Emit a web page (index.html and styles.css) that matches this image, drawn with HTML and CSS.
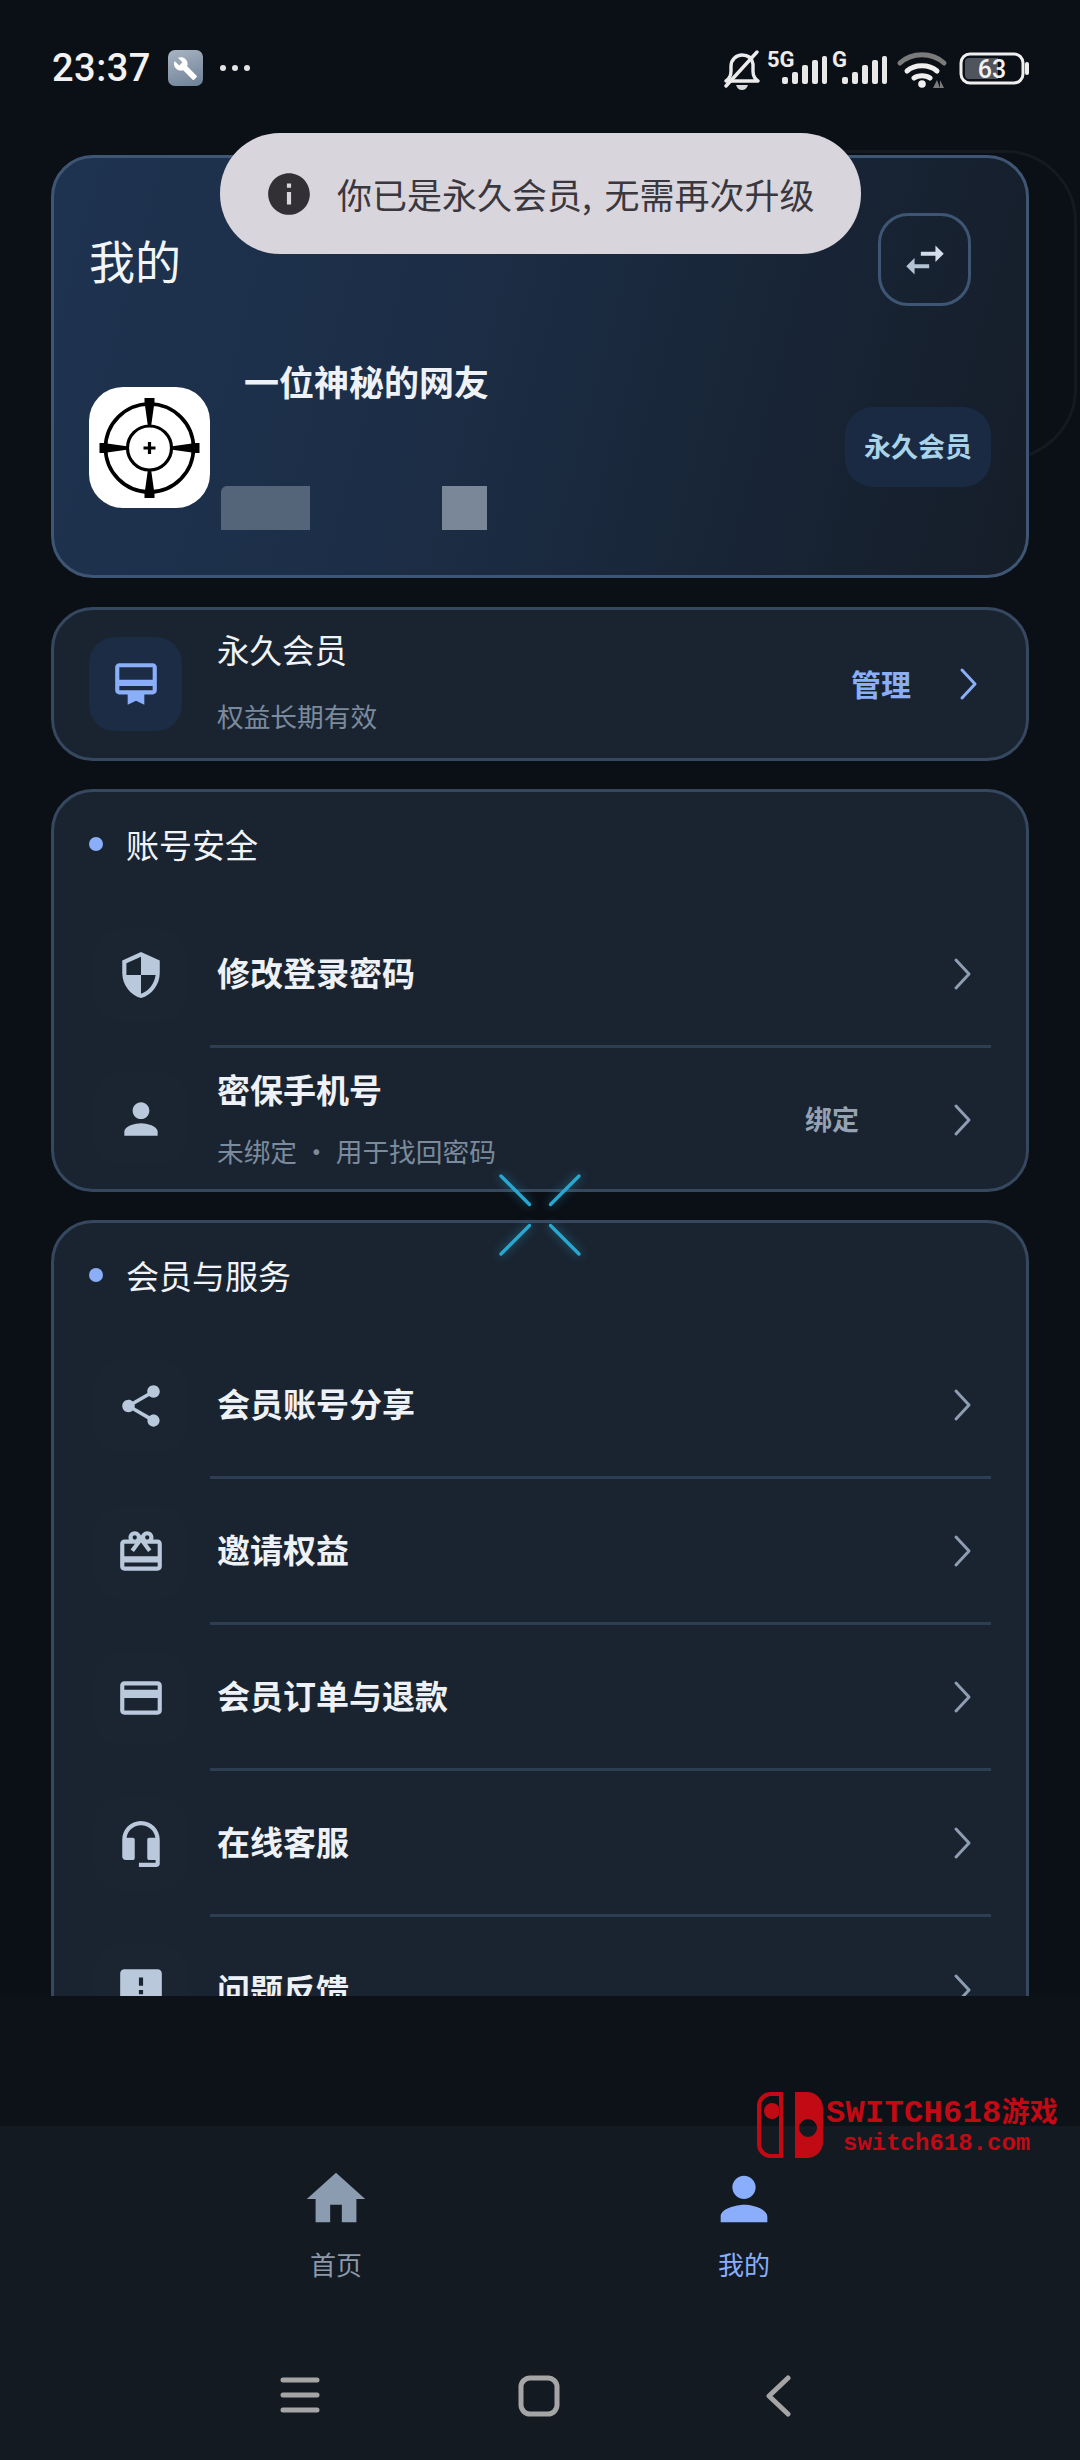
FILE: index.html
```html
<!DOCTYPE html>
<html lang="zh-CN">
<head>
<meta charset="utf-8">
<title>我的</title>
<link rel="stylesheet" href="styles.css">
</head>
<body>
<div class="screen">
  <header class="status">
    <div class="status-left">
      <span class="time">23:37</span>
      <span class="tool-badge"><svg viewBox="0 0 24 24" class="tool-icon"><path d="M22.7 19l-9.1-9.1c.9-2.3.4-5-1.5-6.9-2-2-5-2.4-7.4-1.3L9 6 6 9 1.6 4.7C.4 7.1.9 10.1 2.9 12.1c1.9 1.9 4.6 2.4 6.9 1.5l9.1 9.1c.4.4 1 .4 1.4 0l2.3-2.3c.5-.4.5-1.1.1-1.4z"/></svg></span>
      <span class="more"><i></i><i></i><i></i></span>
    </div>
    <svg class="status-right" viewBox="0 -10 310 54" width="310" height="54">
      <g fill="none" stroke="#ececec" stroke-width="3.4" stroke-linecap="round" stroke-linejoin="round">
        <path d="M2 31c3-2 5-5 5-10v-5c0-6 5-11 11-11s10 3 11 9v7c0 5 2 8 5 10z"/>
        <path d="M2 36L33 2"/>
      </g>
      <path d="M12 35h12c-1 3-3 5-6 5s-5-2-6-5z" fill="#d8d8d8"/>
      <text x="43" y="17" class="net">5G</text>
      <g fill="#e8e8e8">
        <rect x="58" y="27" width="6" height="7" rx="2"/><rect x="68" y="22" width="6" height="12" rx="2"/><rect x="78" y="15" width="6" height="19" rx="2"/><rect x="88" y="10" width="6" height="24" rx="2"/><rect x="98" y="6" width="5" height="28" rx="2"/>
      </g>
      <text x="108" y="17" class="net">G</text>
      <g fill="#e8e8e8">
        <rect x="118" y="27" width="6" height="7" rx="2"/><rect x="128" y="22" width="6" height="12" rx="2"/><rect x="138" y="15" width="6" height="19" rx="2"/><rect x="148" y="10" width="6" height="24" rx="2"/><rect x="158" y="6" width="5" height="28" rx="2"/>
      </g>
      <g fill="none" stroke-width="5" stroke-linecap="round">
        <path d="M176 13c12-11 32-11 44 0" stroke="#7b7b7b"/>
        <path d="M183 21c8-7 22-7 30 0" stroke="#efefef"/>
        <path d="M190 28c4-3 12-3 16 0" stroke="#efefef"/>
      </g>
      <circle cx="198" cy="34" r="3.8" fill="#efefef"/>
      <path d="M209 38l4-8 3 8z M216 38v-8l4 8z" fill="#7b7b7b"/>
      <rect x="237" y="4" width="62" height="29" rx="9" fill="none" stroke="#efefef" stroke-width="3"/>
      <path d="M245 8h29v21h-29a4 4 0 0 1-4-4V12a4 4 0 0 1 4-4z" fill="#50545d"/>
      <text x="268" y="28" class="batt">63</text>
      <rect x="301" y="12" width="4" height="13" rx="2" fill="#efefef"/>
    </svg>
  </header>

  <div class="halo"></div>

  <main class="content">
    <section class="card hero">
      <div class="hero-head">
        <h1 class="hero-title">我的</h1>
        <button class="swap"><svg viewBox="0 0 24 24" class="swap-icon"><path class="swap-a" d="M6.99 11L3 15l3.99 4v-3H14v-2H6.99v-3z"/><path class="swap-b" d="M21 9l-3.99-4v3H10v2h7.01v3L21 9z"/></svg></button>
      </div>
      <div class="profile">
        <div class="avatar">
          <svg viewBox="0 0 121 121" width="121" height="121">
            <g fill="none" stroke="#000">
              <circle cx="60.5" cy="61" r="44" stroke-width="3.6"/>
              <circle cx="60.5" cy="61" r="22" stroke-width="3.2"/>
            </g>
            <path d="M55.5 11h10v4l-3.5 25h-3l-3.500-25z M55.500 111h10v-4l-3.500-25h-3l-3.500 25z M10.500 56v10h4l25-3.500v-3l-25-3.500z M110.500 56v10h-4l-25-3.500v-3l25-3.500z"/>
            <path d="M58.900 55h3.200v4.400h4.400v3.200h-4.400V67h-3.200v-4.400h-4.400v-3.200h4.400z"/>
          </svg>
        </div>
        <div class="identity">
          <div class="name">一位神秘的网友</div>
          <div class="redacted"><span class="blur-a"></span><span class="blur-b"></span></div>
        </div>
        <span class="badge">永久会员</span>
      </div>
    </section>

    <section class="card plan">
      <span class="plan-icon"><svg viewBox="0 0 24 24" class="icon icon-blue"><path d="M20 2H4c-1.110 0-2 .89-2 2v11c0 1.110.89 2 2 2h4v5l4-2 4 2v-5h4c1.110 0 2-.89 2-2V4c0-1.110-.89-2-2-2zm0 13H4v-2h16v2zm0-5H4V4h16v6z"/></svg></span>
      <div class="plan-text">
        <div class="plan-title">永久会员</div>
        <div class="sub">权益长期有效</div>
      </div>
      <span class="manage">管理</span>
      <svg viewBox="0 0 50 50" class="chevron chevron-blue"><path d="M18 11l13 14-13 14"/></svg>
    </section>

    <section class="card list">
      <h2 class="section"><i class="dot"></i>账号安全</h2>
      <div class="row">
        <span class="row-icon"><svg viewBox="0 0 24 24" class="icon"><path d="M12 1L3 5v6c0 5.550 3.840 10.740 9 12 5.160-1.260 9-6.450 9-12V5l-9-4zm0 10.990h7c-.53 4.120-3.280 7.790-7 9.010V12H5V6.300l7-3.110v8.800z"/></svg></span>
        <div class="row-body"><span class="row-title">修改登录密码</span><svg viewBox="0 0 50 50" class="chevron"><path d="M18 11l13 14-13 14"/></svg></div>
      </div>
      <div class="row row-tall">
        <span class="row-icon"><svg viewBox="0 0 24 24" class="icon"><path d="M12 12c2.210 0 4-1.790 4-4s-1.790-4-4-4-4 1.790-4 4 1.790 4 4 4zm0 2c-2.670 0-8 1.340-8 4v2h16v-2c0-2.660-5.330-4-8-4z"/></svg></span>
        <div class="row-body">
          <div class="row-stack"><span class="row-title">密保手机号</span><span class="sub">未绑定 · 用于找回密码</span></div>
          <span class="row-action">绑定</span>
          <svg viewBox="0 0 50 50" class="chevron"><path d="M18 11l13 14-13 14"/></svg>
        </div>
      </div>
    </section>

    <section class="card list">
      <h2 class="section"><i class="dot"></i>会员与服务</h2>
      <div class="row">
        <span class="row-icon"><svg viewBox="0 0 24 24" class="icon"><path d="M18 16.080c-.76 0-1.440.3-1.960.77L8.910 12.700c.05-.23.09-.46.09-.7s-.04-.47-.09-.7l7.050-4.110c.54.5 1.250.81 2.040.81 1.660 0 3-1.340 3-3s-1.340-3-3-3-3 1.340-3 3c0 .24.04.47.09.7L8.040 9.810C7.500 9.310 6.790 9 6 9c-1.660 0-3 1.340-3 3s1.340 3 3 3c.79 0 1.500-.31 2.040-.81l7.120 4.160c-.05.21-.08.43-.08.65 0 1.610 1.310 2.920 2.920 2.920 1.610 0 2.920-1.310 2.920-2.920s-1.310-2.920-2.920-2.920z"/></svg></span>
        <div class="row-body"><span class="row-title">会员账号分享</span><svg viewBox="0 0 50 50" class="chevron"><path d="M18 11l13 14-13 14"/></svg></div>
      </div>
      <div class="row">
        <span class="row-icon"><svg viewBox="0 0 24 24" class="icon"><path d="M20 6h-2.180c.11-.31.18-.65.18-1 0-1.660-1.340-3-3-3-1.050 0-1.960.54-2.500 1.350l-.5.67-.5-.68C10.960 2.540 10.050 2 9 2 7.340 2 6 3.340 6 5c0 .35.07.69.18 1H4c-1.110 0-1.990.89-1.990 2L2 19c0 1.110.89 2 2 2h16c1.110 0 2-.89 2-2V8c0-1.110-.89-2-2-2zm-5-2c.55 0 1 .45 1 1s-.45 1-1 1-1-.45-1-1 .45-1 1-1zM9 4c.55 0 1 .45 1 1s-.45 1-1 1-1-.45-1-1 .45-1 1-1zm11 15H4v-2h16v2zm0-5H4V8h5.080L7 10.830 8.620 12 11 8.760l1-1.360 1 1.360L15.380 12 17 10.830 14.920 8H20v6z"/></svg></span>
        <div class="row-body"><span class="row-title">邀请权益</span><svg viewBox="0 0 50 50" class="chevron"><path d="M18 11l13 14-13 14"/></svg></div>
      </div>
      <div class="row">
        <span class="row-icon"><svg viewBox="0 0 24 24" class="icon"><path d="M20 4H4c-1.110 0-1.990.89-1.990 2L2 18c0 1.110.89 2 2 2h16c1.110 0 2-.89 2-2V6c0-1.110-.89-2-2-2zm0 14H4v-6h16v6zm0-10H4V6h16v2z"/></svg></span>
        <div class="row-body"><span class="row-title">会员订单与退款</span><svg viewBox="0 0 50 50" class="chevron"><path d="M18 11l13 14-13 14"/></svg></div>
      </div>
      <div class="row">
        <span class="row-icon"><svg viewBox="0 0 24 24" class="icon"><path d="M12 1C6.900 1 3 5 3 10v8c0 1 .7 1.700 1.700 1.700H8c.6 0 1-.4 1-1v-8.700c0-.6-.4-1-1-1H5.100C5.500 5.700 8.300 3 12 3s6.500 2.700 6.900 6H16c-.6 0-1 .4-1 1v8.700c0 .6.4 1 1 1h3v1.300h-8V23h8.500c.9 0 1.500-.7 1.500-1.500V10c0-5-3.900-9-9-9z"/></svg></span>
        <div class="row-body"><span class="row-title">在线客服</span><svg viewBox="0 0 50 50" class="chevron"><path d="M18 11l13 14-13 14"/></svg></div>
      </div>
      <div class="row">
        <span class="row-icon"><svg viewBox="0 0 24 24" class="icon"><path d="M20 2H4c-1.100 0-1.990.9-1.990 2L2 22l4-4h14c1.100 0 2-.9 2-2V4c0-1.100-.9-2-2-2zm-7 12h-2v-2h2v2zm0-4h-2V6h2v4z"/></svg></span>
        <div class="row-body"><span class="row-title">问题反馈</span><svg viewBox="0 0 50 50" class="chevron"><path d="M18 11l13 14-13 14"/></svg></div>
      </div>
    </section>
  </main>

  <div class="gap-band"></div>

  <footer class="footer">
    <nav class="tabs">
      <div class="tab">
        <svg viewBox="0 0 24 24" class="tab-icon"><path d="M10 20v-6h4v6h5v-8h3L12 3 2 12h3v8z"/></svg>
        <span>首页</span>
      </div>
      <div class="tab tab-active">
        <svg viewBox="0 0 24 24" class="tab-icon"><path d="M12 12c2.210 0 4-1.790 4-4s-1.790-4-4-4-4 1.790-4 4 1.790 4 4 4zm0 2c-2.670 0-8 1.340-8 4v2h16v-2c0-2.660-5.330-4-8-4z"/></svg>
        <span>我的</span>
      </div>
    </nav>
    <div class="sysnav">
      <svg viewBox="0 0 40 42" class="sys-icon"><path d="M3 5h34M3 20h34M3 35h34"/></svg>
      <svg viewBox="0 0 42 42" class="sys-icon"><rect x="3" y="3" width="36" height="36" rx="9"/></svg>
      <svg viewBox="0 0 30 42" class="sys-icon"><path d="M25 3L6 21l19 18"/></svg>
    </div>
  </footer>

  <div class="toast">
    <svg viewBox="0 0 24 24" class="toast-icon"><path d="M12 2C6.480 2 2 6.480 2 12s4.480 10 10 10 10-4.480 10-10S17.520 2 12 2zm1 15h-2v-6h2v6zm0-8h-2V7h2v2z"/></svg>
    <span>你已是永久会员, 无需再次升级</span>
  </div>

  <svg class="spinner" viewBox="0 0 90 90" width="90" height="90">
    <path d="M6 6l28.500 28.500M84 6L55.500 34.500M6 84l28.500-28.500M84 84L55.500 55.500"/>
  </svg>

  <div class="watermark">
    <svg viewBox="0 0 66 66" width="66" height="66" class="wm-logo">
      <path fill-rule="evenodd" d="M14 0h12v66H14C6 66 0 60 0 52V14C0 6 6 0 14 0zM22 4h-8C9 4 4 9 4 14v38c0 5 5 10 10 10h8zM15 11a8 8 0 1 0 .01 16A8 8 0 0 0 15 11z"/>
      <path fill-rule="evenodd" d="M38 0h12c9 0 16 7 16 16v34c0 9-7 16-16 16H38zM51 27a9 9 0 1 0 .01 18A9 9 0 0 0 51 27z"/>
    </svg>
    <div class="wm-text">
      <div class="wm-top">SWITCH618<b>游戏</b></div>
      <div class="wm-bottom">switch618.com</div>
    </div>
  </div>
</div>
</body>
</html>
```

FILE: styles.css
```css
* { box-sizing: border-box; }
html, body { margin: 0; padding: 0; background: #0b0f16; }
body { font-family: "Noto Sans CJK SC", "Noto Sans", sans-serif; color: #f0f3f7; }
h1, h2 { margin: 0; font-weight: 400; }

.screen {
  position: relative;
  width: 1080px;
  height: 2460px;
  overflow: hidden;
  display: flex;
  flex-direction: column;
  background: #0b0f16;
}

/* status bar */
.status {
  flex: none;
  height: 155px;
  padding: 40px 51px 0 52px;
  display: flex;
  justify-content: space-between;
  align-items: flex-start;
}
.status-left { display: flex; align-items: center; height: 40px; margin-top: 8px; }
.time { font: 500 38px/40px Roboto, sans-serif; color: #f2f2f2; letter-spacing: .5px; }
.tool-badge {
  width: 35px;
  height: 36px;
  margin-left: 17px;
  border-radius: 7px;
  background: linear-gradient(160deg, #a9b5c3, #6d8095);
  display: flex;
  align-items: center;
  justify-content: center;
}
.tool-icon { width: 25px; height: 25px; fill: #fff; }
.more { display: flex; gap: 6px; margin-left: 17px; }
.more i { width: 6px; height: 6px; border-radius: 50%; background: #e4e4e4; }
.status-right { display: block; margin-right: -5px; }
.net { font: 700 22px Roboto, sans-serif; fill: #ececec; }
.batt { font: 500 25px Roboto, sans-serif; fill: #f2f2f2; text-anchor: middle; }

.halo {
  position: absolute;
  z-index: 0;
  left: 600px;
  top: 150px;
  width: 477px;
  height: 310px;
  border: 3px solid #141a22;
  border-radius: 72px;
}

/* scroll area */
.content {
  position: relative;
  z-index: 1;
  flex: none;
  height: 1841px;
  overflow: hidden;
  padding: 0 51px;
  display: flex;
  flex-direction: column;
  gap: 28px;
}
.card {
  flex: none;
  width: 978px;
  border: 3px solid #36485f;
  border-radius: 42px;
  background: #1a2431;
}

/* hero */
.hero {
  height: 423px;
  margin-bottom: 1px;
  padding: 55px 35px 0;
  border-color: #3e5673;
  background: linear-gradient(105deg, #1e3350 0%, #1c2e47 38%, #151d28 100%);
}
.hero-head { height: 93px; display: flex; justify-content: space-between; align-items: center; }
.hero-title { font-size: 46px; line-height: 60px; margin-bottom: 2px; color: #f2f5f8; }
.swap {
  width: 93px;
  height: 93px;
  padding: 0;
  margin-right: 20px;
  border: 3px solid #3e5673;
  border-radius: 30px;
  background: transparent;
  display: flex;
  align-items: center;
  justify-content: center;
}
.swap-icon { width: 50px; height: 50px; }
.swap-a { fill: #b4c3d6; }
.swap-b { fill: #d4deea; }
.profile { margin-top: 55px; height: 172px; display: flex; align-items: center; }
.avatar { flex: none; width: 121px; height: 121px; border-radius: 34px; background: #fff; }
.avatar svg { display: block; }
.identity { flex: 1; margin-left: 11px; height: 172px; display: flex; flex-direction: column; justify-content: space-between; padding: 0 0 3px; }
.name { padding-left: 23px; font-size: 35px; line-height: 40px; font-weight: 700; color: #eef2f7; }
.redacted { display: flex; gap: 132px; }
.blur-a { width: 89px; height: 44px; background: #556579; border-top-left-radius: 6px; }
.blur-b { width: 45px; height: 44px; background: #7a8799; }
.badge {
  flex: none;
  width: 146px;
  height: 80px;
  padding-bottom: 4px;
  border-radius: 28px;
  background: #1a2a42;
  color: #a8d3e8;
  font-size: 27px;
  font-weight: 700;
  display: flex;
  align-items: center;
  justify-content: center;
}

/* plan */
.plan { height: 154px; padding: 0 51px 0 35px; display: flex; align-items: center; }
.plan-icon {
  flex: none;
  width: 93px;
  height: 94px;
  border-radius: 26px;
  background: #1c2c45;
  display: flex;
  align-items: center;
  justify-content: center;
}
.plan-text { flex: 1; margin-left: 35px; padding-bottom: 6px; display: flex; flex-direction: column; gap: 28px; }
.plan-title { font-size: 32.5px; line-height: 42px; color: #f0f3f7; }
.sub { font-size: 26.7px; line-height: 36px; color: #7b8a9c; }
.manage { font-size: 30px; font-weight: 700; padding-bottom: 2px; color: #8aaef8; margin-right: 33px; }
.icon { width: 50px; height: 50px; fill: #b9c8da; display: block; }
.icon-blue { fill: #8aaef8; }
.chevron { flex: none; width: 50px; height: 50px; margin-top: 3px; margin-right: -2px; fill: none; stroke: #8e9db1; stroke-width: 3; stroke-linecap: round; stroke-linejoin: round; }
.chevron-blue { stroke: #8aaef8; margin-top: 0; margin-right: -19px; }

/* list cards */
.section {
  height: 110px;
  padding: 0 0 6px 35px;
  display: flex;
  align-items: center;
  font-size: 33px;
  color: #f0f3f7;
}
.dot { width: 14px; height: 14px; border-radius: 50%; background: #8aaef8; margin-right: 23px; }
.row { height: 146px; padding: 0 35px 0 40px; display: flex; align-items: stretch; }
.row-tall { height: 141px; }
.row-icon {
  flex: none;
  width: 93px;
  align-self: center;
  height: 93px;
  border-radius: 26px;
  background: #1b2532;
  display: flex;
  align-items: center;
  justify-content: center;
}
.row-body {
  flex: 1;
  min-width: 0;
  margin-left: 23px;
  padding: 0 5px 3px 7px;
  display: flex;
  align-items: center;
  justify-content: space-between;
  border-bottom: 3px solid #2e3e52;
}
.row:last-child .row-body { border-bottom: 0; }
.row-tall .row-body { padding-bottom: 0; }
.row-title { font-size: 33px; line-height: 42px; font-weight: 700; color: #eef2f7; }
.row-stack { flex: 1; display: flex; flex-direction: column; gap: 23px; }
.row-action { font-size: 27px; font-weight: 700; color: #94a2b3; margin-right: 79px; }

/* lower */
.gap-band { flex: none; height: 130px; background: #0d1118; }
.footer { flex: none; height: 334px; background: #141a22; }
.tabs { height: 190px; padding: 38px 132px 0; display: grid; grid-template-columns: 1fr 1fr; }
.tab { display: flex; flex-direction: column; align-items: center; color: #8b99ab; font-size: 26px; line-height: 36px; }
.tab-icon { width: 70px; height: 70px; fill: #8b9cb1; display: block; margin-bottom: 12px; }
.tab-active { color: #8aaefc; }
.tab-active .tab-icon { fill: #8aaefc; }
.sysnav { height: 144px; padding: 59px 0 0 280px; display: flex; align-items: flex-start; gap: 198px; }
.sysnav .sys-icon:last-child { margin-left: 5px; }
.sys-icon { height: 42px; width: auto; fill: none; stroke: #a5a5a5; stroke-width: 5; stroke-linecap: round; stroke-linejoin: round; }

/* overlays */
.toast {
  position: absolute;
  z-index: 2;
  left: 220px;
  top: 133px;
  width: 641px;
  height: 121px;
  padding-left: 44px;
  border-radius: 60px;
  background: #d9d5dc;
  display: flex;
  align-items: center;
  color: #3a383e;
  font-size: 35px;
  word-spacing: 5px;
}
.toast-icon { width: 50px; height: 50px; fill: #323034; margin-right: 23px; flex: none; }
.spinner {
  position: absolute;
  z-index: 2;
  left: 495px;
  top: 1170px;
  fill: none;
  stroke: #28a8d0;
  stroke-width: 3.4;
  stroke-linecap: round;
  filter: drop-shadow(0 0 5px rgba(40, 168, 208, .55));
}
.watermark { position: absolute; z-index: 2; left: 757px; top: 2092px; display: flex; color: #c10a14; }
.wm-logo { fill: #c10a14; display: block; }
.wm-text { margin-left: 3px; }
.wm-top { font: 700 32px/36px "Liberation Mono", monospace; height: 36px; white-space: nowrap; letter-spacing: .3px; }
.wm-top b { font: 700 28px/36px "Noto Sans CJK SC", sans-serif; }
.wm-bottom { margin-top: 3px; margin-left: 17px; font: 700 24px/26px "Liberation Mono", monospace; white-space: nowrap; }
```
